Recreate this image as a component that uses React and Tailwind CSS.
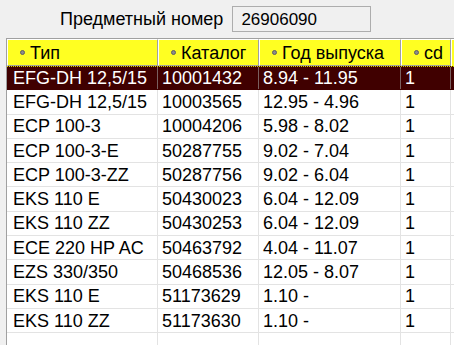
import React from "react";

const cols = [
  { key: "type", label: "Тип", w: "w-[151px]" },
  { key: "cat", label: "Каталог", w: "w-[101px]" },
  { key: "year", label: "Год выпуска", w: "w-[142px]" },
  { key: "cd", label: "cd", w: "w-[50px]" },
];

const rows = [
  ["EFG-DH 12,5/15", "10001432", "8.94 - 11.95", "1"],
  ["EFG-DH 12,5/15", "10003565", "12.95 - 4.96", "1"],
  ["ECP 100-3", "10004206", "5.98 - 8.02", "1"],
  ["ECP 100-3-E", "50287755", "9.02 - 7.04", "1"],
  ["ECP 100-3-ZZ", "50287756", "9.02 - 6.04", "1"],
  ["EKS 110 E", "50430023", "6.04 - 12.09", "1"],
  ["EKS 110 ZZ", "50430253", "6.04 - 12.09", "1"],
  ["ECE 220 HP AC", "50463792", "4.04 - 11.07", "1"],
  ["EZS 330/350", "50468536", "12.05 - 8.07", "1"],
  ["EKS 110 E", "51173629", "1.10 -", "1"],
  ["EKS 110 ZZ", "51173630", "1.10 -", "1"],
];

function HeaderCell({ label, w }) {
  return (
    <div
      className={`${w} h-[27px] shrink-0 flex items-center pl-[12px] bg-[#ffff22] border-l border-t border-white border-r border-b border-r-[#a0a0a0] border-b-[#a0a0a0]`}
    >
      <span className="w-[5px] h-[5px] rounded-full bg-[#8c8c8c] border border-[#606060] mr-[5px]" />
      <span>{label}</span>
    </div>
  );
}

export default function App() {
  return (
    <div
      className="w-[454px] h-[345px] overflow-hidden bg-[#f0f0f0] text-[18px] text-black leading-none"
      style={{ fontFamily: '"Liberation Sans", Arial, sans-serif' }}
    >
      {/* top field */}
      <div className="h-[38px] flex items-start pt-[6px] pl-[60px]">
        <span className="mt-[4px]">Предметный номер</span>
        <div className="ml-[9px] w-[139px] h-[26px] border border-[#adadad] bg-[#f0f0f0] flex items-center pl-[8px] text-[17px]">
          26906090
        </div>
      </div>

      {/* grid */}
      <div className="ml-[6px] w-[520px] h-[307px] border-l border-t border-[#a0a0a0] bg-white flex flex-col">
        <div className="flex">
          {cols.map((c) => (
            <HeaderCell key={c.key} label={c.label} w={c.w} />
          ))}
          <div className="w-[40px] h-[27px] shrink-0 bg-[#ffff22] border-l border-t border-white" />
        </div>

        {rows.map((r, i) => {
          const sel = i === 0;
          return (
            <div
              key={i}
              className={`flex h-[24.3px] shrink-0 border-b ${
                sel
                  ? "bg-[#400000] text-white border-b-[#400000] border-t border-t-[#d8d800] border-dotted"
                  : "border-[#e3e3e3]"
              }`}
            >
              {cols.map((c, j) => (
                <div
                  key={c.key}
                  className={`${c.w} shrink-0 flex items-center ${j === 0 ? "pl-[6px]" : "pl-[4px]"} border-r border-solid ${
                    sel ? "border-[#7a6060]" : "border-[#e3e3e3]"
                  } whitespace-nowrap`}
                >
                  {r[j]}
                </div>
              ))}
            </div>
          );
        })}

        <div className="flex flex-1">
          {cols.map((c) => (
            <div key={c.key} className={`${c.w} shrink-0 border-r border-[#e3e3e3]`} />
          ))}
        </div>
      </div>
    </div>
  );
}
